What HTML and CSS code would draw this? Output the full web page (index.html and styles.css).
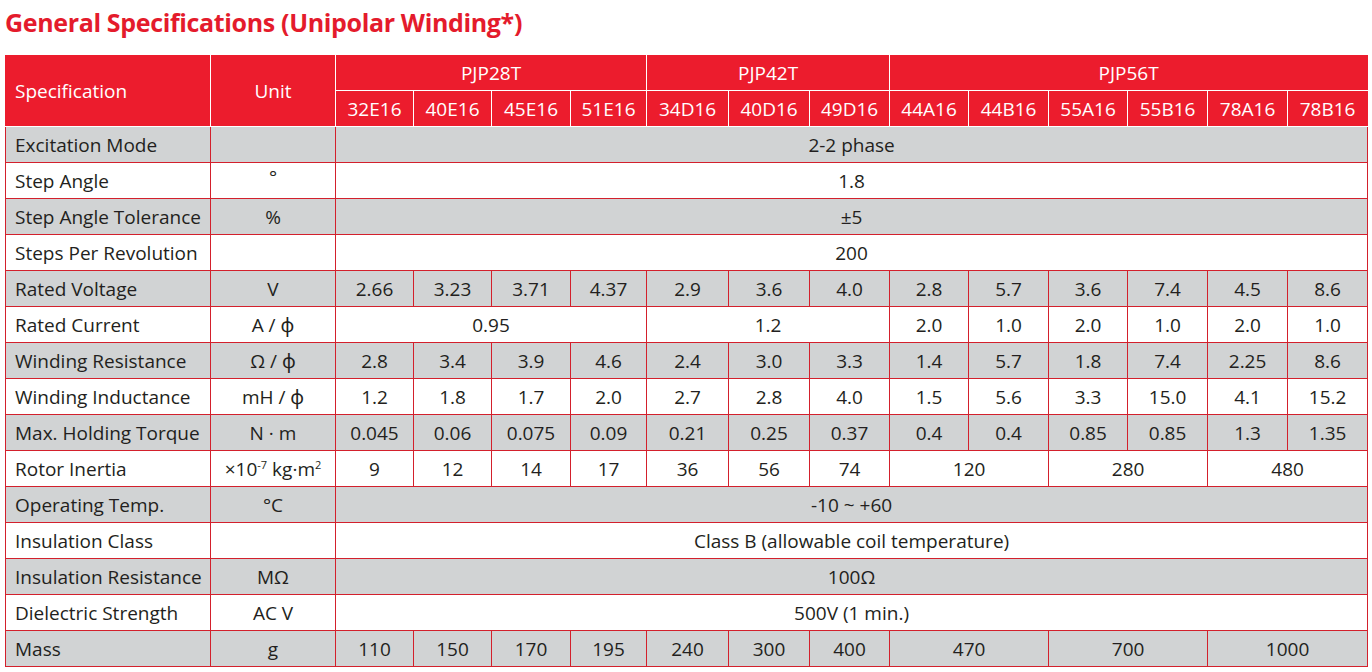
FILE: index.html
```html
<!DOCTYPE html>
<html lang="en">
<head>
<meta charset="utf-8">
<title>General Specifications</title>
<link rel="stylesheet" href="styles.css">
</head>
<body>
<div class="page">
  <h1 class="title">General Specifications (Unipolar Winding*)</h1>
  <table class="spec">
    <colgroup>
      <col class="c-spec"><col class="c-unit">
      <col class="w78"><col class="w78"><col class="w79"><col class="w76">
      <col class="w82"><col class="w81"><col class="w80">
      <col class="w79"><col class="w80"><col class="w79"><col class="w80"><col class="w80"><col class="w80">
    </colgroup>
    <thead>
      <tr class="h1">
        <th rowspan="2" class="lbl first">Specification</th>
        <th rowspan="2">Unit</th>
        <th colspan="4">PJP28T</th>
        <th colspan="3">PJP42T</th>
        <th colspan="6" class="last">PJP56T</th>
      </tr>
      <tr class="h2">
        <th>32E16</th><th>40E16</th><th>45E16</th><th>51E16</th>
        <th>34D16</th><th>40D16</th><th>49D16</th>
        <th>44A16</th><th>44B16</th><th>55A16</th><th>55B16</th><th>78A16</th><th class="last">78B16</th>
      </tr>
    </thead>
    <tbody>
      <tr class="g"><td class="lbl">Excitation Mode</td><td></td><td colspan="13">2-2 phase</td></tr>
      <tr><td class="lbl">Step Angle</td><td><span class="deg">°</span></td><td colspan="13">1.8</td></tr>
      <tr class="g"><td class="lbl">Step Angle Tolerance</td><td>%</td><td colspan="13">±5</td></tr>
      <tr><td class="lbl">Steps Per Revolution</td><td></td><td colspan="13">200</td></tr>
      <tr class="g"><td class="lbl">Rated Voltage</td><td>V</td>
        <td>2.66</td><td>3.23</td><td>3.71</td><td>4.37</td><td>2.9</td><td>3.6</td><td>4.0</td>
        <td>2.8</td><td>5.7</td><td>3.6</td><td>7.4</td><td>4.5</td><td>8.6</td></tr>
      <tr><td class="lbl">Rated Current</td><td>A / ϕ</td>
        <td colspan="4">0.95</td><td colspan="3">1.2</td>
        <td>2.0</td><td>1.0</td><td>2.0</td><td>1.0</td><td>2.0</td><td>1.0</td></tr>
      <tr class="g"><td class="lbl">Winding Resistance</td><td>Ω / ϕ</td>
        <td>2.8</td><td>3.4</td><td>3.9</td><td>4.6</td><td>2.4</td><td>3.0</td><td>3.3</td>
        <td>1.4</td><td>5.7</td><td>1.8</td><td>7.4</td><td>2.25</td><td>8.6</td></tr>
      <tr><td class="lbl">Winding Inductance</td><td>mH / ϕ</td>
        <td>1.2</td><td>1.8</td><td>1.7</td><td>2.0</td><td>2.7</td><td>2.8</td><td>4.0</td>
        <td>1.5</td><td>5.6</td><td>3.3</td><td>15.0</td><td>4.1</td><td>15.2</td></tr>
      <tr class="g"><td class="lbl">Max. Holding Torque</td><td>N · m</td>
        <td>0.045</td><td>0.06</td><td>0.075</td><td>0.09</td><td>0.21</td><td>0.25</td><td>0.37</td>
        <td>0.4</td><td>0.4</td><td>0.85</td><td>0.85</td><td>1.3</td><td>1.35</td></tr>
      <tr><td class="lbl">Rotor Inertia</td><td>×10<sup>-7</sup> kg·m<sup>2</sup></td>
        <td>9</td><td>12</td><td>14</td><td>17</td><td>36</td><td>56</td><td>74</td>
        <td colspan="2">120</td><td colspan="2">280</td><td colspan="2">480</td></tr>
      <tr class="g"><td class="lbl">Operating Temp.</td><td>°C</td><td colspan="13">-10 ~ +60</td></tr>
      <tr><td class="lbl">Insulation Class</td><td></td><td colspan="13">Class B (allowable coil temperature)</td></tr>
      <tr class="g"><td class="lbl">Insulation Resistance</td><td>MΩ</td><td colspan="13">100Ω</td></tr>
      <tr><td class="lbl">Dielectric Strength</td><td>AC V</td><td colspan="13">500V (1 min.)</td></tr>
      <tr class="g"><td class="lbl">Mass</td><td>g</td>
        <td>110</td><td>150</td><td>170</td><td>195</td><td>240</td><td>300</td><td>400</td>
        <td colspan="2">470</td><td colspan="2">700</td><td colspan="2">1000</td></tr>
    </tbody>
  </table>
</div>
</body>
</html>
```
FILE: styles.css
```css
html, body {
  margin: 0;
  padding: 0;
  background: #ffffff;
}

body {
  font-family: "Open Sans", "Noto Sans", "Liberation Sans", sans-serif;
  color: #231f20;
}

.page {
  padding: 5px 0 0 5px;
}

.title {
  margin: 0 0 16px 0;
  font-size: 25px;
  line-height: 34px;
  font-weight: 700;
  color: #e41b2c;
  letter-spacing: -0.35px;
}

.spec {
  border-collapse: collapse;
  table-layout: fixed;
  width: 1362px;
  font-size: 19px;
  border: 1px solid #d3202c;
}

.c-spec { width: 205px; }
.c-unit { width: 125px; }
.w76 { width: 76px; }
.w78 { width: 78px; }
.w79 { width: 79px; }
.w80 { width: 80px; }
.w81 { width: 81px; }
.w82 { width: 82px; }

.spec th {
  background: #ec1c2d;
  color: #ffffff;
  font-weight: 400;
  border: 1px solid #ffffff;
  padding: 0;
  text-align: center;
  line-height: 22px;
  font-size: 19px;
}

.spec thead tr.h1 th {
  border-top-color: #ec1c2d;
  height: 34px;
}

.spec thead tr.h2 th {
  height: 35px;
}

.spec th.first {
  border-left-color: #ec1c2d;
}

.spec th.last {
  border-right-color: #ec1c2d;
}

.spec td {
  border: 1px solid #d3202c;
  padding: 0;
  height: 35px;
  text-align: center;
  line-height: 22px;
  white-space: nowrap;
}

.spec .lbl {
  text-align: left;
  padding-left: 9px;
}

.spec tr.g td {
  background: #d1d3d4;
}

.spec sup {
  font-size: 11px;
  line-height: 0;
  vertical-align: 7px;
}

.deg {
  display: inline-block;
  transform: translateY(-4px);
}
```
